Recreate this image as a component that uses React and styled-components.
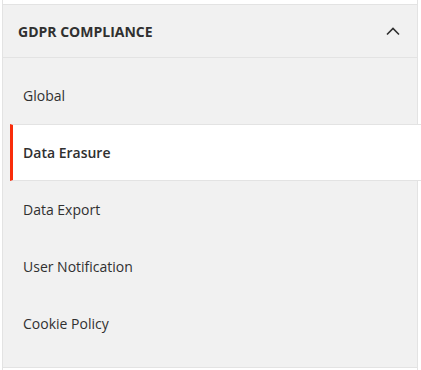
import React, { useState } from "react";
import styled, { createGlobalStyle } from "styled-components";

const GlobalStyle = createGlobalStyle`
  body {
    margin: 0;
    background: #ffffff;
    font-family: "Open Sans", "Liberation Sans", sans-serif;
    color: #303030;
  }
`;

const PageUI = styled.div`
  width: 416px;
  margin-left: 2px;
`;

const StubUI = styled.div`
  height: ${(p) => p.h}px;
  border-left: 1px solid #e3e3e3;
  border-right: 1px solid #e3e3e3;
  border-bottom: ${(p) => (p.bottom ? "1px solid #e3e3e3" : "none")};
  background: #ffffff;
`;

const SectionUI = styled.div`
  background: #f1f1f1;
  border: 1px solid #e3e3e3;
  border-top: none;
`;

const HeaderUI = styled.div`
  height: 52px;
  display: flex;
  align-items: center;
  justify-content: space-between;
  padding: 0 17px 0 15px;
  border-bottom: 1px solid #e3e3e3;
  cursor: pointer;
`;

const TitleUI = styled.div`
  font-size: 14px;
  font-weight: 700;
  text-transform: uppercase;
  color: #303030;
`;

const ListUI = styled.ul`
  list-style: none;
  margin: 0;
  padding: 9px 0 15px 0;
`;

const ItemUI = styled.li`
  height: 55px;
  display: flex;
  align-items: center;
  margin-left: 7px;
  margin-right: ${(p) => (p.active ? "-5px" : "0")};
  padding-left: 10px;
  border-top: 1px solid ${(p) => (p.active ? "#e3e3e3" : "transparent")};
  border-bottom: 1px solid ${(p) => (p.active ? "#e3e3e3" : "transparent")};
  border-left: 3px solid ${(p) => (p.active ? "#f92d0b" : "transparent")};
  background: ${(p) => (p.active ? "#ffffff" : "transparent")};
  font-size: 14px;
  font-weight: ${(p) => (p.active ? 600 : 400)};
  color: #303030;
  cursor: pointer;
`;

const Chevron = () => (
  <svg width="14" height="9" viewBox="0 0 14 9">
    <path d="M1 7.5 L7 1.5 L13 7.5" fill="none" stroke="#303030" strokeWidth="1.6" />
  </svg>
);

const items = ["Global", "Data Erasure", "Data Export", "User Notification", "Cookie Policy"];

export default function App() {
  const [active, setActive] = useState(1);

  return (
    <>
      <GlobalStyle />
      <PageUI>
        <StubUI h={4} bottom />
        <SectionUI>
          <HeaderUI>
            <TitleUI>GDPR Compliance</TitleUI>
            <Chevron />
          </HeaderUI>
          <ListUI>
            {items.map((item, i) => (
              <ItemUI key={item} active={i === active} onClick={() => setActive(i)}>
                {item}
              </ItemUI>
            ))}
          </ListUI>
        </SectionUI>
        <StubUI h={20} />
      </PageUI>
    </>
  );
}
